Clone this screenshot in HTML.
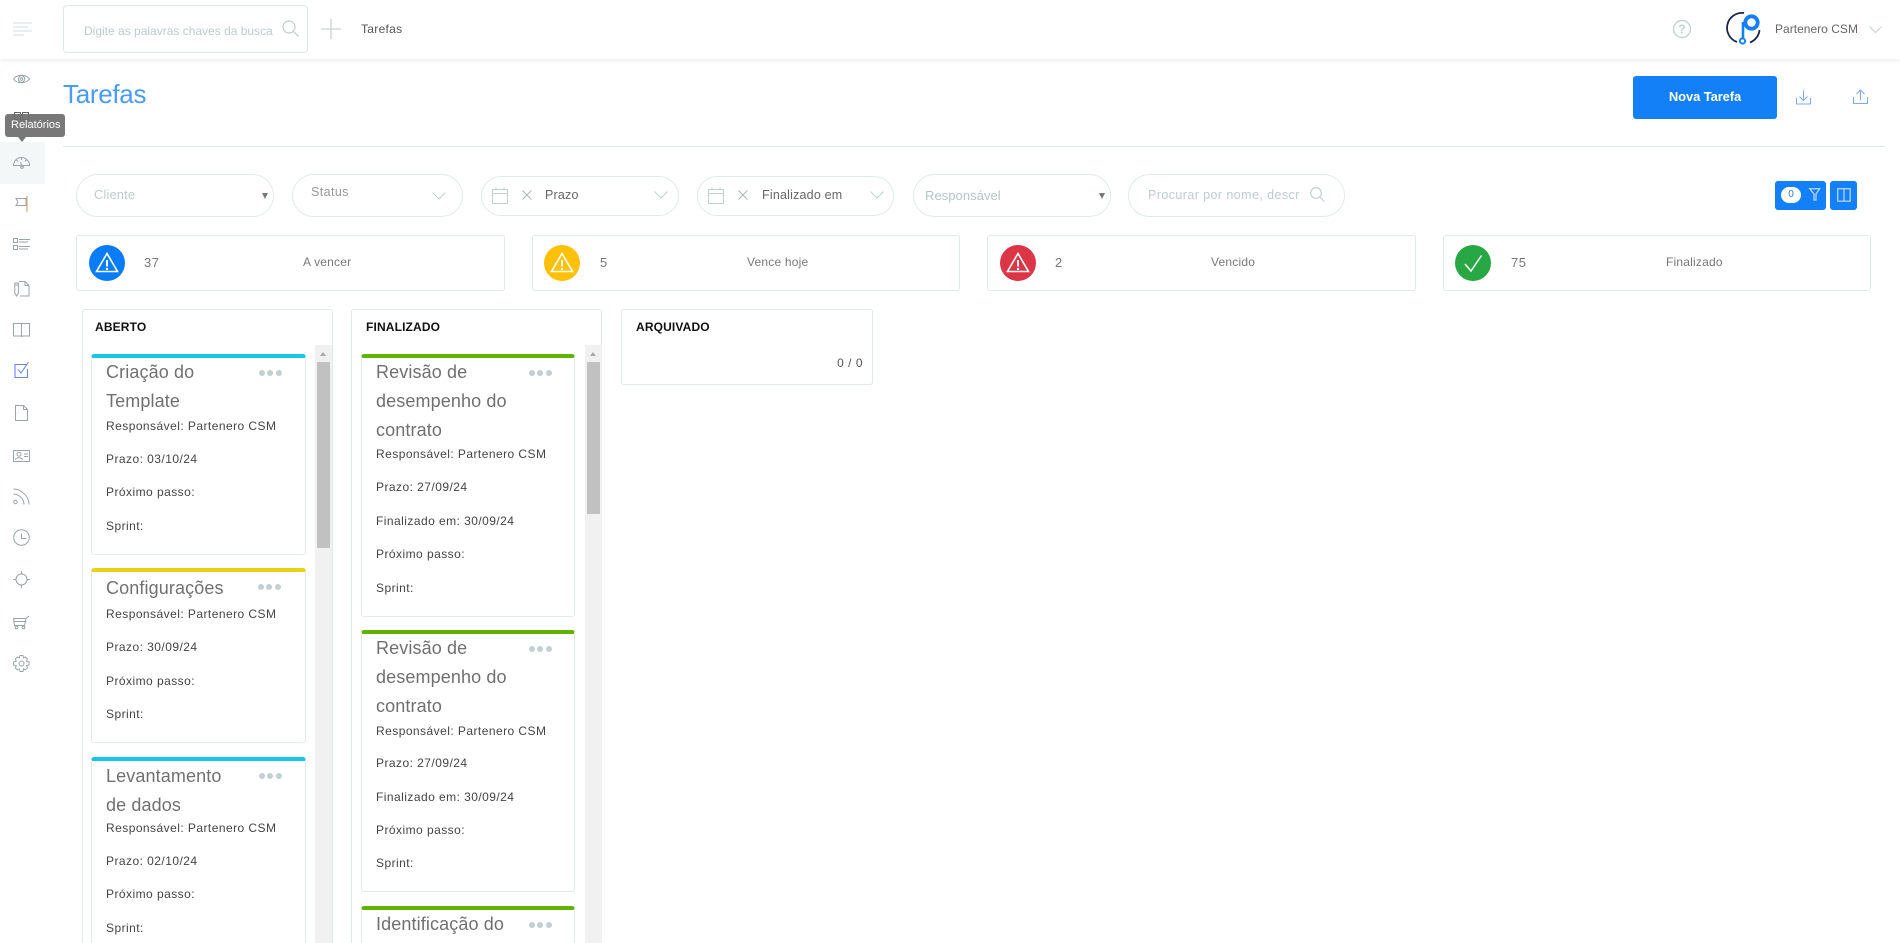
<!DOCTYPE html>
<html lang="pt-BR">
<head>
<meta charset="utf-8">
<title>Tarefas</title>
<style>
*{box-sizing:border-box}
html,body{margin:0;padding:0;width:1900px;height:943px;overflow:hidden;background:#fff;font-family:"Liberation Sans",Arial,sans-serif}
#w{position:relative;width:1900px;height:943px;overflow:hidden;background:#fff}
.a{position:absolute}
.t{position:absolute;white-space:nowrap;line-height:20px;height:20px}
svg{position:absolute;overflow:visible}
.pill{position:absolute;border:1px solid #e2ebeb;border-radius:22px;background:#fff}
.stat{position:absolute;top:235px;height:56px;border:1px solid #e0eaea;border-radius:3px;background:#fff}
.col{position:absolute;top:309px;width:251px;height:640px;border:1px solid #e0eaea;border-radius:3px;background:#fff}
.track{position:absolute;top:345px;width:17px;height:600px;background:#f1f1f1}
.thumb{position:absolute;top:362px;width:13px;background:#c1c1c1}
.card{position:absolute;border:1px solid #e3ebeb;border-top:4px solid;border-radius:3px;background:#fff}
.h{font-weight:bold;font-size:12px;color:#111;letter-spacing:.15px}
.ti{font-size:18px;color:#707070;letter-spacing:.12px}
.l{font-size:12px;color:#444;letter-spacing:.45px}
.dots{position:absolute;width:23px;height:6px}
.dots i{position:absolute;top:0;width:6px;height:6px;border-radius:50%;background:#c3cfd1}
.lb{font-size:12px;color:#777;letter-spacing:.2px}
.n{font-size:13px;color:#777;letter-spacing:.5px}
.ic{stroke:#9aa5a8}
</style>
</head>
<body>
<div id="w">

<!-- top bar -->
<div class="a" style="left:0;top:0;width:1900px;height:59px;background:#fff;box-shadow:0 1px 5px rgba(0,0,0,.09)"></div>
<svg style="left:13px;top:21px" width="20" height="16" stroke="#d3dcdc" stroke-width="1" fill="none"><path d="M0 2h19M0 6h15M0 10h19M0 14h11"/></svg>
<div class="a" style="left:63px;top:5px;width:245px;height:48px;border:1px solid #dfe8e8;border-radius:4px"></div>
<div class="t" style="left:84px;top:21px;font-size:12px;color:#bdcccc">Digite as palavras chaves da busca</div>
<svg style="left:282px;top:20px" width="18" height="18" stroke="#c0cdcd" stroke-width="1.2" fill="none"><circle cx="7" cy="7" r="6"/><path d="M11.5 11.5l5 5"/></svg>
<svg style="left:321px;top:19px" width="20" height="20" stroke="#bccaca" stroke-width="1.1" fill="none"><path d="M10 0v20M0 10h20"/></svg>
<div class="t" style="left:361px;top:19px;font-size:12px;color:#555;letter-spacing:.3px">Tarefas</div>

<svg style="left:1672px;top:19px" width="20" height="20" fill="none"><circle cx="10" cy="10" r="8.5" stroke="#c5d3d3" stroke-width="1.4"/><text x="10" y="14.5" font-size="12.5" font-family="Liberation Sans" font-weight="bold" fill="#c5d3d3" text-anchor="middle">?</text></svg>
<svg style="left:1725px;top:9px" width="40" height="40" fill="none">
<path d="M19 4A15 15 0 0 0 12 33" stroke="#1b2352" stroke-width="1.8"/>
<path d="M25 33.500A15 15 0 0 0 34.500 21" stroke="#1b2352" stroke-width="1.8"/>
<path d="M18 13v17" stroke="#1380f8" stroke-width="2.6"/>
<circle cx="26.500" cy="13.500" r="6.200" stroke="#1380f8" stroke-width="3.800"/>
<circle cx="17.500" cy="32" r="2.600" stroke="#1380f8" stroke-width="2"/>
</svg>
<div class="t" style="left:1775px;top:19px;font-size:12px;color:#666;letter-spacing:.02px">Partenero CSM</div>
<svg style="left:1869px;top:26px" width="13" height="8" stroke="#c7d3d3" stroke-width="1" fill="none"><path d="M.5 .5l6 6 6-6"/></svg>

<!-- sidebar -->
<div class="a" style="left:0;top:142px;width:45px;height:42px;background:#f4f7f8"></div>
<svg class="ic" style="left:13px;top:71px" width="17" height="16" fill="none"><path d="M.5 8C4 3 13 3 16.500 8C13 13 4 13 .5 8Z"/><circle cx="8.500" cy="8" r="3.200"/><circle cx="8.500" cy="8" r="1.300"/></svg>
<svg style="left:13px;top:112px" width="17" height="9" stroke="#666" fill="none"><rect x="1.500" y=".5" width="6" height="7"/><rect x="9.500" y=".5" width="6" height="7"/></svg>
<svg class="ic" style="left:13px;top:156px" width="17" height="13" fill="none"><path d="M.5 9.500A8 8 0 0 1 16.500 9.500H.5Z"/><path d="M8.500 1.500v2.500M3.500 4l1.500 1.500M13.500 4L12 5.500M7.500 6l1.500 5"/><circle cx="9" cy="11" r="1.400"/></svg>
<svg style="left:15px;top:196px" width="14" height="17" fill="none"><path d="M1 2.500h10v7H1l2-3.500z" stroke="#9aa5a8"/><path d="M12 0v16" stroke="#d0ab80" stroke-width="1.200"/></svg>
<svg class="ic" style="left:13px;top:238px" width="17" height="14" fill="none"><rect x=".5" y=".5" width="4" height="4"/><rect x=".5" y="7.500" width="4" height="4"/><path d="M6 1.500h11M6 4h9M6 8.500h11M6 11h9"/></svg>
<svg class="ic" style="left:14px;top:280px" width="16" height="17" fill="none"><path d="M5 1.500h6l4 4v10.500H6"/><path d="M11 1.500v4h4"/><path d="M.8 3h3.600v10l-1.800 3-1.800-3z"/><path d="M.8 5h3.600"/></svg>
<svg class="ic" style="left:13px;top:323px" width="17" height="14" fill="none"><path d="M.5 .5h16v12.500H.5zM8.500 .5V14"/></svg>
<svg style="left:14px;top:362px" width="16" height="16" fill="none"><path d="M12.500 2.500H1v13h12.500V7" stroke="#6d84ee" stroke-width="1.100"/><path d="M4 7.500l3 3.500 7.500-11" stroke="#6d84ee" stroke-width="1"/></svg>
<svg class="ic" style="left:15px;top:405px" width="13" height="16" fill="none"><path d="M.5 .5h8l4 4v11H.5z"/><path d="M8.500 .5v4h4"/></svg>
<svg class="ic" style="left:13px;top:450px" width="17" height="13" fill="none"><rect x=".5" y=".5" width="16" height="11"/><circle cx="6" cy="4.200" r="2"/><path d="M2.500 10c0-3 7-3 7 0M11 4h4M11 6.500h4"/></svg>
<svg class="ic" style="left:13px;top:488px" width="17" height="17" fill="none"><path d="M.5 1C8 1 16 8 16 16.500M.5 6C6 6 11 11 11 16.500"/><circle cx="2.500" cy="14" r="1.700"/></svg>
<svg class="ic" style="left:13px;top:529px" width="17" height="17" fill="none"><circle cx="8.500" cy="8.500" r="7.800"/><path d="M8.500 4.500v5h5"/></svg>
<svg class="ic" style="left:13px;top:571px" width="17" height="17" fill="none"><circle cx="8.500" cy="8.500" r="5.500"/><path d="M8.500 0v3.500M8.500 13.500V17M0 8.500h3.500M13.500 8.500H17"/></svg>
<svg class="ic" style="left:13px;top:615px" width="17" height="15" fill="none"><path d="M0 3.500h13l3-2.500"/><path d="M.5 3.500l1 7h10l1.500-7M1 6.500h12.500"/><circle cx="3.500" cy="12.500" r="1.400"/><circle cx="10.500" cy="12.500" r="1.400"/></svg>
<svg class="ic" style="left:13px;top:655px" width="17" height="17" fill="none"><circle cx="8.500" cy="8.500" r="2.500"/><path d="M7 .5h3l.5 2.500 2-1 2 2-1 2.200 2.500.8v3l-2.500.6 1 2.200-2 2-2-1-.5 2.700H7l-.7-2.700-2 1-2-2 1-2.200L.5 10V7l2.800-.8-1-2.200 2-2 2 1z"/></svg>

<!-- tooltip -->
<div class="a" style="left:5px;top:114px;width:60px;height:23px;background:rgba(110,110,110,.93);border-radius:3px"></div>
<div class="a" style="left:18px;top:137px;width:0;height:0;border-left:4.500px solid transparent;border-right:4.500px solid transparent;border-top:5px solid #777"></div>
<div class="t" style="left:11px;top:115px;font-size:11px;color:#fff">Relatórios</div>

<!-- header -->
<div class="t" style="left:63px;top:79px;font-size:26px;line-height:30px;height:30px;color:#4a9af8;letter-spacing:-.3px">Tarefas</div>
<div class="a" style="left:1633px;top:76px;width:144px;height:43px;background:#1380f8;border-radius:3px"></div>
<div class="t" style="left:1633px;top:87px;width:144px;text-align:center;font-size:13px;color:#fff;font-weight:bold;letter-spacing:-.1px">Nova Tarefa</div>
<svg style="left:1796px;top:90px" width="15" height="15" stroke="#7fa8f5" fill="none"><path d="M.5 8v6h14V8M7.500 .5V10M3.500 6.500l4 4 4-4"/></svg>
<svg style="left:1853px;top:89px" width="15" height="16" stroke="#7fa8f5" fill="none"><path d="M.5 8v6.500h14V8M7.500 11V1M3.500 5l4-4 4 4"/></svg>
<div class="a" style="left:63px;top:146px;width:1822px;height:1px;background:#e0eaea"></div>

<!-- filters -->
<div class="pill" style="left:76px;top:174px;width:198px;height:43px"></div>
<div class="t" style="left:94px;top:185px;font-size:13px;color:#bfcccc;letter-spacing:.1px">Cliente</div>
<div class="a" style="left:262px;top:193px;width:0;height:0;border-left:3px solid transparent;border-right:3px solid transparent;border-top:6px solid #777"></div>

<div class="pill" style="left:292px;top:174px;width:171px;height:43px"></div>
<div class="t" style="left:311px;top:182px;font-size:12.500px;color:#999;letter-spacing:.4px">Status</div>
<svg style="left:432px;top:192px" width="14" height="8" stroke="#c3d0d0" fill="none"><path d="M.5 .5l6.500 6.500 6.500-6.500"/></svg>

<div class="pill" style="left:481px;top:176px;width:198px;height:40px"></div>
<svg style="left:492px;top:187px" width="16" height="17" stroke="#c3d0d0" fill="none"><path d="M.5 2.500h15v14H.5zM.5 6.500h15M4 .5v3M12 .5v3"/></svg>
<svg style="left:522px;top:190px" width="10" height="10" stroke="#a9b5b5" fill="none"><path d="M.5 .5l9 9M9.500 .5l-9 9"/></svg>
<div class="t" style="left:545px;top:185px;font-size:12.500px;color:#666;letter-spacing:.2px">Prazo</div>
<svg style="left:654px;top:191px" width="14" height="8" stroke="#c3d0d0" fill="none"><path d="M.5 .5l6.500 6.500 6.500-6.500"/></svg>

<div class="pill" style="left:697px;top:176px;width:197px;height:40px"></div>
<svg style="left:708px;top:187px" width="16" height="17" stroke="#c3d0d0" fill="none"><path d="M.5 2.500h15v14H.5zM.5 6.500h15M4 .5v3M12 .5v3"/></svg>
<svg style="left:738px;top:190px" width="10" height="10" stroke="#a9b5b5" fill="none"><path d="M.5 .5l9 9M9.500 .5l-9 9"/></svg>
<div class="t" style="left:762px;top:185px;font-size:12.500px;color:#666;letter-spacing:.2px">Finalizado em</div>
<svg style="left:870px;top:191px" width="14" height="8" stroke="#c3d0d0" fill="none"><path d="M.5 .5l6.500 6.500 6.500-6.500"/></svg>

<div class="pill" style="left:913px;top:174px;width:198px;height:43px"></div>
<div class="t" style="left:925px;top:186px;font-size:13px;color:#b5c5c5;letter-spacing:.05px">Responsável</div>
<div class="a" style="left:1099px;top:193px;width:0;height:0;border-left:3px solid transparent;border-right:3px solid transparent;border-top:6px solid #777"></div>

<div class="pill" style="left:1128px;top:174px;width:217px;height:43px"></div>
<div class="t" style="left:1148px;top:185px;font-size:12.500px;color:#bfcccc;letter-spacing:.42px">Procurar por nome, descr</div>
<svg style="left:1310px;top:187px" width="15" height="15" stroke="#c0cdcd" stroke-width="1.100" fill="none"><circle cx="6" cy="6" r="5.300"/><path d="M10 10l4.500 4.500"/></svg>

<div class="a" style="left:1775px;top:181px;width:51px;height:29px;background:#1380f8;border-radius:3px"></div>
<div class="a" style="left:1781px;top:187px;width:20px;height:16px;background:#fff;border-radius:8px"></div>
<div class="t" style="left:1781px;top:185px;width:20px;text-align:center;font-size:10px;color:#3a70e8">0</div>
<svg style="left:1809px;top:188px" width="12" height="13" stroke="#b5d4fb" stroke-width="1.300" fill="none"><path d="M.7 .7h10L7 6v6H5V6z"/></svg>
<div class="a" style="left:1830px;top:181px;width:27px;height:29px;background:#1380f8;border-radius:3px"></div>
<svg style="left:1837px;top:188px" width="14" height="14" stroke="#b5d4fb" stroke-width="1.300" fill="none"><rect x=".7" y=".7" width="12.500" height="12.500"/><path d="M7 .7v12.500"/></svg>

<!-- stats -->
<div class="stat" style="left:76px;width:429px"></div>
<div class="stat" style="left:532px;width:428px"></div>
<div class="stat" style="left:987px;width:429px"></div>
<div class="stat" style="left:1443px;width:428px"></div>

<svg style="left:89px;top:245px" width="36" height="36"><circle cx="18" cy="18" r="18" fill="#0a7cf5"/><path d="M18 8.500L7.500 26.500h21z" fill="none" stroke="#fff" stroke-width="1.600"/><path d="M18 15v6.500" stroke="#fff" stroke-width="2"/><circle cx="18" cy="24" r="1.200" fill="#fff"/></svg>
<svg style="left:544px;top:245px" width="36" height="36"><circle cx="18" cy="18" r="18" fill="#ffc107"/><path d="M18 8.500L7.500 26.500h21z" fill="none" stroke="#fff" stroke-width="1.600"/><path d="M18 15v6.500" stroke="#fff" stroke-width="2"/><circle cx="18" cy="24" r="1.200" fill="#fff"/></svg>
<svg style="left:1000px;top:245px" width="36" height="36"><circle cx="18" cy="18" r="18" fill="#dc3545"/><path d="M18 8.500L7.500 26.500h21z" fill="none" stroke="#fff" stroke-width="1.600"/><path d="M18 15v6.500" stroke="#fff" stroke-width="2"/><circle cx="18" cy="24" r="1.200" fill="#fff"/></svg>
<svg style="left:1455px;top:245px" width="36" height="36"><circle cx="18" cy="18" r="18" fill="#28a745"/><path d="M10 19l6 7 10.500-15.500" fill="none" stroke="#fff" stroke-width="1.500"/></svg>

<div class="t n" style="left:144px;top:253px">37</div>
<div class="t lb" style="left:303px;top:252px">A vencer</div>
<div class="t n" style="left:600px;top:253px">5</div>
<div class="t lb" style="left:747px;top:252px">Vence hoje</div>
<div class="t n" style="left:1055px;top:253px">2</div>
<div class="t lb" style="left:1211px;top:252px">Vencido</div>
<div class="t n" style="left:1511px;top:253px">75</div>
<div class="t lb" style="left:1666px;top:252px">Finalizado</div>

<!-- columns -->
<div class="col" style="left:82px"></div>
<div class="col" style="left:351px"></div>
<div class="col" style="left:621px;width:252px;height:76px"></div>
<div class="t h" style="left:95px;top:317px">ABERTO</div>
<div class="t h" style="left:366px;top:317px">FINALIZADO</div>
<div class="t h" style="left:636px;top:317px">ARQUIVADO</div>
<div class="t" style="left:763px;top:353px;width:100px;text-align:right;font-size:12px;color:#555;letter-spacing:.5px">0 / 0</div>

<div class="track" style="left:315px"></div>
<div class="thumb" style="left:317px;height:186px"></div>
<div class="a" style="left:320px;top:352px;width:0;height:0;border-left:3.500px solid transparent;border-right:3.500px solid transparent;border-bottom:4px solid #a8a8a8"></div>
<div class="track" style="left:585px"></div>
<div class="thumb" style="left:587px;height:152px"></div>
<div class="a" style="left:590px;top:352px;width:0;height:0;border-left:3.500px solid transparent;border-right:3.500px solid transparent;border-bottom:4px solid #a8a8a8"></div>

<!-- ABERTO cards -->
<div class="card" style="left:91px;top:354px;width:215px;height:201px;border-top-color:#17c8e6"></div>
<div class="t ti" style="left:106px;top:362px">Criação do</div>
<div class="t ti" style="left:106px;top:391px">Template</div>
<div class="dots" style="left:259px;top:370px"><i style="left:0"></i><i style="left:8px"></i><i style="left:17px"></i></div>
<div class="t l" style="left:106px;top:416px">Responsável: Partenero CSM</div>
<div class="t l" style="left:106px;top:449px">Prazo: 03/10/24</div>
<div class="t l" style="left:106px;top:482px">Próximo passo:</div>
<div class="t l" style="left:106px;top:516px">Sprint:</div>

<div class="card" style="left:91px;top:568px;width:215px;height:175px;border-top-color:#e6d314"></div>
<div class="t ti" style="left:106px;top:578px">Configurações</div>
<div class="dots" style="left:258px;top:584px"><i style="left:0"></i><i style="left:8px"></i><i style="left:17px"></i></div>
<div class="t l" style="left:106px;top:604px">Responsável: Partenero CSM</div>
<div class="t l" style="left:106px;top:637px">Prazo: 30/09/24</div>
<div class="t l" style="left:106px;top:671px">Próximo passo:</div>
<div class="t l" style="left:106px;top:704px">Sprint:</div>

<div class="card" style="left:91px;top:757px;width:215px;height:200px;border-top-color:#17c8e6"></div>
<div class="t ti" style="left:106px;top:766px">Levantamento</div>
<div class="t ti" style="left:106px;top:795px">de dados</div>
<div class="dots" style="left:259px;top:773px"><i style="left:0"></i><i style="left:8px"></i><i style="left:17px"></i></div>
<div class="t l" style="left:106px;top:818px">Responsável: Partenero CSM</div>
<div class="t l" style="left:106px;top:851px">Prazo: 02/10/24</div>
<div class="t l" style="left:106px;top:884px">Próximo passo:</div>
<div class="t l" style="left:106px;top:918px">Sprint:</div>

<!-- FINALIZADO cards -->
<div class="card" style="left:361px;top:354px;width:214px;height:263px;border-top-color:#5fb400"></div>
<div class="t ti" style="left:376px;top:362px">Revisão de</div>
<div class="t ti" style="left:376px;top:391px">desempenho do</div>
<div class="t ti" style="left:376px;top:420px">contrato</div>
<div class="dots" style="left:529px;top:370px"><i style="left:0"></i><i style="left:8px"></i><i style="left:17px"></i></div>
<div class="t l" style="left:376px;top:444px">Responsável: Partenero CSM</div>
<div class="t l" style="left:376px;top:477px">Prazo: 27/09/24</div>
<div class="t l" style="left:376px;top:511px">Finalizado em: 30/09/24</div>
<div class="t l" style="left:376px;top:544px">Próximo passo:</div>
<div class="t l" style="left:376px;top:578px">Sprint:</div>

<div class="card" style="left:361px;top:630px;width:214px;height:262px;border-top-color:#5fb400"></div>
<div class="t ti" style="left:376px;top:638px">Revisão de</div>
<div class="t ti" style="left:376px;top:667px">desempenho do</div>
<div class="t ti" style="left:376px;top:696px">contrato</div>
<div class="dots" style="left:529px;top:646px"><i style="left:0"></i><i style="left:8px"></i><i style="left:17px"></i></div>
<div class="t l" style="left:376px;top:721px">Responsável: Partenero CSM</div>
<div class="t l" style="left:376px;top:753px">Prazo: 27/09/24</div>
<div class="t l" style="left:376px;top:787px">Finalizado em: 30/09/24</div>
<div class="t l" style="left:376px;top:820px">Próximo passo:</div>
<div class="t l" style="left:376px;top:853px">Sprint:</div>

<div class="card" style="left:361px;top:906px;width:214px;height:60px;border-top-color:#5fb400"></div>
<div class="t ti" style="left:376px;top:914px">Identificação do</div>
<div class="dots" style="left:529px;top:922px"><i style="left:0"></i><i style="left:8px"></i><i style="left:17px"></i></div>

</div>
</body>
</html>
